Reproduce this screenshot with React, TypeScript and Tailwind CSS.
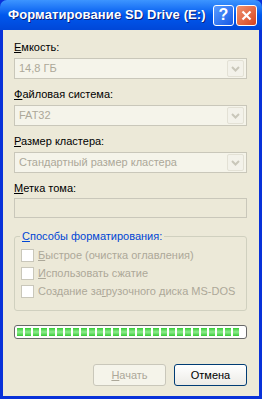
import React from 'react';

const font = { fontFamily: '"Liberation Sans", Arial, sans-serif' };

const U = ({ children }: { children: React.ReactNode }) => <span className="underline underline-offset-[1px]">{children}</span>;

const ComboBox = ({ value }: { value: string }) => (
    <div className="h-[21px] w-[233px] border border-[#C9C7BA] bg-[#F5F4EA] flex items-center justify-between pl-[4px] pr-[2px]">
        <span className="text-[11px] leading-[13px] text-[#ACA899]">{value}</span>
        <div className="h-[17px] w-[17px] rounded-[2px] border border-[#E3E1D5] bg-[#F3F2EA] flex items-center justify-center">
            <svg width="9" height="6" viewBox="0 0 9 6">
                <path d="M1 1 L4.5 4.5 L8 1" stroke="#C9C7BA" strokeWidth="2" fill="none" />
            </svg>
        </div>
    </div>
);

const Label = ({ children }: { children: React.ReactNode }) => (
    <div className="text-[11px] leading-[13px] text-black">{children}</div>
);

const CheckRow = ({ children }: { children: React.ReactNode }) => (
    <div className="flex items-center gap-[4px] h-[13px]">
        <div className="h-[13px] w-[13px] border border-[#C9C7BA] bg-white"></div>
        <span className="text-[11px] leading-[13px] text-[#ACA899]">{children}</span>
    </div>
);

export default function App() {
    const blocks = Array.from({ length: 28 });
    return (
        <div className="w-[262px] h-[399px] flex flex-col bg-[#0831D9]" style={font}>
            {/* title bar */}
            <div className="h-[30px] rounded-t-[7px] bg-gradient-to-b from-[#3D95FF] via-[#0058EE] to-[#0047D8] flex items-center justify-between pl-[8px] pr-[5px]">
                <span className="text-white font-bold text-[13px] leading-[16px] tracking-[0.1px] [text-shadow:1px_1px_0_#0A1E78]">
                    Форматирование SD Drive (E:)
                </span>
                <div className="flex gap-[2px]">
                    <div className="h-[21px] w-[21px] rounded-[3px] border border-white bg-gradient-to-br from-[#5A9BFF] to-[#1659E6] flex items-center justify-center text-white font-bold text-[16px] leading-none">
                        ?
                    </div>
                    <div className="h-[21px] w-[21px] rounded-[3px] border border-white bg-gradient-to-br from-[#F0926E] to-[#D5411B] flex items-center justify-center">
                        <svg width="11" height="11" viewBox="0 0 11 11">
                            <path d="M1.5 1.5 L9.5 9.5 M9.5 1.5 L1.5 9.5" stroke="white" strokeWidth="2.2" />
                        </svg>
                    </div>
                </div>
            </div>

            {/* body */}
            <div className="flex-1 mx-[3px] mb-[3px] bg-[#ECE9D8] flex flex-col pl-[11px] pr-[12px]">
                <div className="mt-[11px]"><Label><U>Е</U>мкость:</Label></div>
                <div className="mt-[4px]"><ComboBox value="14,8 ГБ" /></div>

                <div className="mt-[9px]"><Label><U>Ф</U>айловая система:</Label></div>
                <div className="mt-[4px]"><ComboBox value="FAT32" /></div>

                <div className="mt-[9px]"><Label><U>Р</U>азмер кластера:</Label></div>
                <div className="mt-[4px]"><ComboBox value="Стандартный размер кластера" /></div>

                <div className="mt-[9px]"><Label><U>М</U>етка тома:</Label></div>
                <div className="mt-[3px] h-[20px] w-[233px] border border-[#C9C7BA] bg-[#ECE9D8]"></div>

                {/* group box */}
                <div className="mt-[18px] relative w-[233px] h-[75px] border border-[#D0D0BF] rounded-[3px] pt-[12px] pl-[6px] flex flex-col gap-[5px]">
                    <span className="absolute -top-[7px] left-[5px] px-[2px] bg-[#ECE9D8] text-[11px] leading-[13px] text-[#0046D5]">
                        <U>С</U>пособы форматирования:
                    </span>
                    <CheckRow><U>Б</U>ыстрое (очистка оглавления)</CheckRow>
                    <CheckRow><U>И</U>спользовать сжатие</CheckRow>
                    <CheckRow>Создание за<U>г</U>рузочного диска MS-DOS</CheckRow>
                </div>

                {/* progress */}
                <div className="mt-[14px] w-[233px] h-[14px] border border-[#686868] rounded-[3px] bg-white flex items-center gap-[2px] px-[2px]">
                    {blocks.map((_, i) => (
                        <div key={i} className="h-[8px] w-[6px] bg-gradient-to-b from-[#2FCB2F] via-[#8CEB8C] to-[#2FCB2F]"></div>
                    ))}
                </div>

                {/* buttons */}
                <div className="mt-auto mb-[10px] flex justify-end gap-[8px]">
                    <div className="h-[22px] w-[73px] rounded-[3px] border border-[#C9C7BA] bg-[#F5F4EA] flex items-center justify-center text-[11px] text-[#ACA899]">
                        <U>Н</U>ачать
                    </div>
                    <div className="h-[22px] w-[73px] rounded-[3px] border border-[#003C74] bg-gradient-to-b from-white to-[#ECEBE6] flex items-center justify-center text-[11px] text-black">
                        Отмена
                    </div>
                </div>
            </div>
        </div>
    );
}
